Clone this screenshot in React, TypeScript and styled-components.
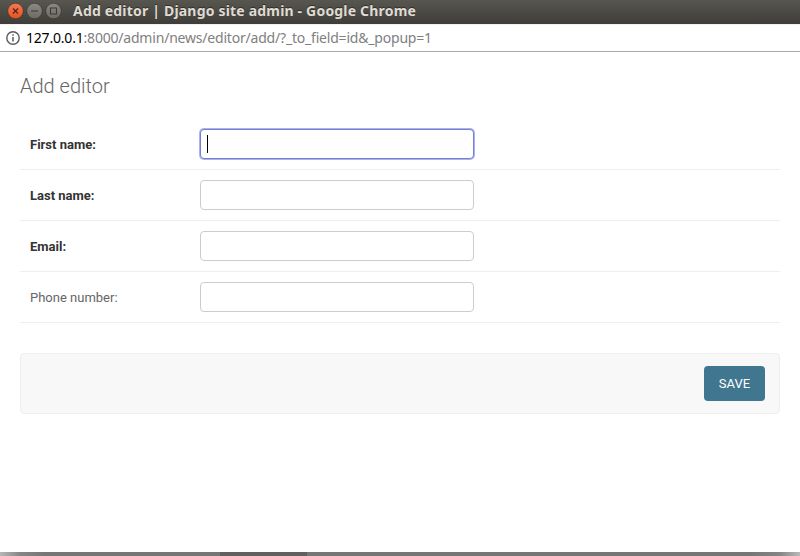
import React from "react";
import styled, { createGlobalStyle } from "styled-components";

const GlobalStyle = createGlobalStyle`
  *, *::before, *::after { box-sizing: border-box; }
  body { margin: 0; background: #fff; font-family: Roboto, "Liberation Sans", sans-serif; }
`;

const Window = styled.div`
  width: 800px;
  height: 556px;
  display: flex;
  flex-direction: column;
  overflow: hidden;
  background: #fff;
`;

const TitleBar = styled.header`
  height: 24px;
  flex: none;
  display: flex;
  align-items: center;
  padding: 0 0 3px 5px;
  background: linear-gradient(#57564f, #3e3d39);
`;

const WindowControls = styled.div`
  width: 68px;
  height: 20px;
  flex: none;
  svg { display: block; }
`;

const WindowTitle = styled.h1`
  margin: 0;
  font: bold 14px/20px "Noto Sans", sans-serif;
  letter-spacing: 0.19px;
  color: #dfdbd2;
  text-shadow: 0 -1px 0 #302f2b;
  white-space: nowrap;
`;

const AddressBar = styled.div`
  height: 28px;
  flex: none;
  display: flex;
  align-items: center;
  padding-left: 6px;
  gap: 6px;
  border-top: 1px solid #f2f2f2;
  border-bottom: 1px solid #a9a9a9;
`;

const Address = styled.span`
  font: 14px/20px "Noto Sans", sans-serif;
  letter-spacing: -0.2px;
  color: #808080;
  white-space: nowrap;
`;

const Host = styled.span`
  color: #000;
`;

const Page = styled.main`
  flex: 1;
  padding: 20px 20px 0;
`;

const Heading = styled.h2`
  margin: 0 0 19px;
  font-size: 20px;
  line-height: 28px;
  font-weight: 300;
  color: #666;
`;

const FieldRow = styled.div`
  height: 51px;
  display: flex;
  align-items: center;
  padding: 0 10px;
  border-bottom: 1px solid #eee;
`;

const Label = styled.label<{ $required: boolean }>`
  width: 170px;
  padding-top: 2px;
  font-size: 13px;
  line-height: 20px;
  font-weight: ${(p) => (p.$required ? 700 : 400)};
  color: ${(p) => (p.$required ? "#333" : "#666")};
`;

const InputWrap = styled.div`
  position: relative;
  display: flex;
`;

const Input = styled.input<{ $active: boolean }>`
  width: 274px;
  height: 30px;
  padding: 5px 6px;
  border: 1px solid ${(p) => (p.$active ? "#7b7fc6" : "#ccc")};
  border-radius: 4px;
  outline: none;
  background: #fff;
  box-shadow: ${(p) => (p.$active ? "0 0 0 1px #abb1f8" : "none")};
  font: 13px Roboto, sans-serif;
`;

const Caret = styled.span`
  position: absolute;
  left: 7px;
  top: 6px;
  width: 1px;
  height: 18px;
  background: #000;
`;

const SubmitRow = styled.div`
  height: 61px;
  margin-top: 30px;
  padding: 0 14px;
  display: flex;
  align-items: center;
  justify-content: flex-end;
  background: #f8f8f8;
  border: 1px solid #eee;
  border-radius: 4px;
`;

const SaveButton = styled.button`
  width: 61px;
  height: 35px;
  padding: 0;
  border: 0;
  border-radius: 4px;
  background: #417690;
  color: #fff;
  font: 400 13px/15px Roboto, sans-serif;
`;

const BottomEdge = styled.footer`
  height: 4px;
  flex: none;
  display: flex;
  justify-content: center;
  padding-right: 273px;
  background: linear-gradient(90deg, #b8b8b8, #878686 20px, #777676 45px, #777676 750px, #858585 780px, #bababa);
`;

const EdgeSegment = styled.div`
  width: 87px;
  background: #625f61;
`;

const fields = [
  { id: "first_name", label: "First name:", required: true, active: true },
  { id: "last_name", label: "Last name:", required: true, active: false },
  { id: "email", label: "Email:", required: true, active: false },
  { id: "phone", label: "Phone number:", required: false, active: false },
];

function ControlIcons() {
  return (
    <svg width="60" height="20" viewBox="0 0 60 20">
      <defs>
        <linearGradient id="close" x1="0" y1="0" x2="0" y2="1">
          <stop offset="0" stopColor="#f37b54" />
          <stop offset="1" stopColor="#e9501f" />
        </linearGradient>
        <linearGradient id="neutral" x1="0" y1="0" x2="0" y2="1">
          <stop offset="0" stopColor="#8b8980" />
          <stop offset="1" stopColor="#6c6a63" />
        </linearGradient>
      </defs>
      <circle cx="10.5" cy="10" r="7.8" fill="url(#close)" stroke="#34332f" strokeWidth="0.6" />
      <path d="M8 7.500l5 5m0-5l-5 5" stroke="#45271b" strokeWidth="1.100" />
      <circle cx="29.5" cy="10" r="7.8" fill="url(#neutral)" stroke="#34332f" strokeWidth="0.6" />
      <path d="M26 10h7" stroke="#3c3b37" strokeWidth="1.100" />
      <circle cx="48.5" cy="10" r="7.8" fill="url(#neutral)" stroke="#34332f" strokeWidth="0.6" />
      <path d="M45.500 7h6v6h-6z" fill="none" stroke="#3c3b37" strokeWidth="1.100" />
    </svg>
  );
}

function InfoIcon() {
  return (
    <svg width="14" height="14" viewBox="0 0 14 14">
      <circle cx="7" cy="7" r="6.2" fill="none" stroke="#5a5a5a" strokeWidth="1.4" />
      <path d="M7 3.200v1.600M7 6v4.500" stroke="#5a5a5a" strokeWidth="1.500" />
    </svg>
  );
}

export default function App() {
  return (
    <Window>
      <GlobalStyle />
      <TitleBar>
        <WindowControls>
          <ControlIcons />
        </WindowControls>
        <WindowTitle>Add editor | Django site admin - Google Chrome</WindowTitle>
      </TitleBar>
      <AddressBar>
        <InfoIcon />
        <Address>
          <Host>127.0.0.1</Host>:8000/admin/news/editor/add/?_to_field=id&amp;_popup=1
        </Address>
      </AddressBar>
      <Page>
        <Heading>Add editor</Heading>
        <form>
          {fields.map((f) => (
            <FieldRow key={f.id}>
              <Label htmlFor={f.id} $required={f.required}>{f.label}</Label>
              <InputWrap>
                <Input id={f.id} type="text" $active={f.active} />
                {f.active && <Caret />}
              </InputWrap>
            </FieldRow>
          ))}
          <SubmitRow>
            <SaveButton type="button">SAVE</SaveButton>
          </SubmitRow>
        </form>
      </Page>
      <BottomEdge>
        <EdgeSegment />
      </BottomEdge>
    </Window>
  );
}
